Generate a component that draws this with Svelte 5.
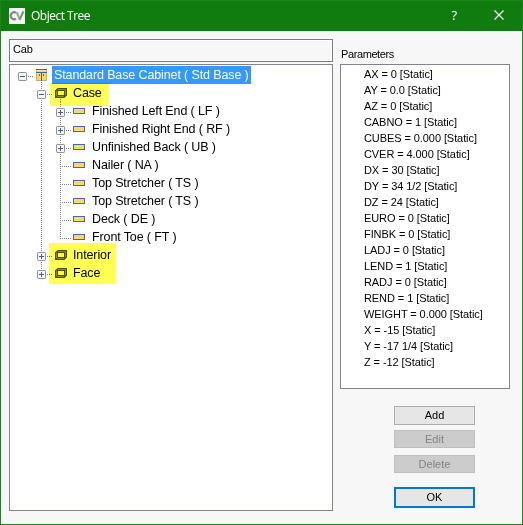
<script>
  const nodes = [
    { level: 0, icon: 'cabinet', toggle: 'minus', text: 'Standard Base Cabinet ( Std Base )', selected: true, last: true },
    { level: 1, icon: 'box', toggle: 'minus', text: 'Case' },
    { level: 2, icon: 'part', toggle: 'plus', text: 'Finished Left End ( LF )' },
    { level: 2, icon: 'part', toggle: 'plus', text: 'Finished Right End ( RF )' },
    { level: 2, icon: 'part', toggle: 'plus', text: 'Unfinished Back ( UB )' },
    { level: 2, icon: 'part', text: 'Nailer ( NA )' },
    { level: 2, icon: 'part', text: 'Top Stretcher ( TS )' },
    { level: 2, icon: 'part', text: 'Top Stretcher ( TS )' },
    { level: 2, icon: 'part', text: 'Deck ( DE )' },
    { level: 2, icon: 'part', text: 'Front Toe ( FT )', last: true },
    { level: 1, icon: 'box', toggle: 'plus', text: 'Interior' },
    { level: 1, icon: 'box', toggle: 'plus', text: 'Face', last: true }
  ];
  const params = [
    'AX = 0', 'AY = 0.0', 'AZ = 0', 'CABNO = 1', 'CUBES = 0.000', 'CVER = 4.000',
    'DX = 30', 'DY = 34 1/2', 'DZ = 24', 'EURO = 0', 'FINBK = 0', 'LADJ = 0',
    'LEND = 1', 'RADJ = 0', 'REND = 1', 'WEIGHT = 0.000', 'X = -15', 'Y = -17 1/4', 'Z = -12'
  ];
</script>

<div class="window">
  <header>
    <svg class="logo" width="16" height="16" viewBox="0 0 16 16">
      <rect width="16" height="16" fill="#f4f4f4" />
      <path d="M7 4.9A3.3 3.5 0 1 0 7 10.6" fill="none" stroke="#858585" stroke-width="2.2" />
      <path d="M7.8 4.2L10.6 11.2" fill="none" stroke="#8fb287" stroke-width="2.2" />
      <path d="M10.6 11.8L14.4 3.4" fill="none" stroke="#858585" stroke-width="2" />
    </svg>
    <h1>Object Tree</h1>
    <span class="help">?</span>
    <svg class="close" width="10" height="10" viewBox="0 0 10 10">
      <path d="M.5 .5L9.5 9.5M9.5 .5L.5 9.5" stroke="#fff" stroke-width="1.2" />
    </svg>
  </header>
  <main>
    <section class="left">
      <div class="field">Cab</div>
      <div class="tree">
        {#each nodes as n}
          <div class="row">
            {#if n.level > 0}<span class="cell"></span>{/if}
            {#if n.level > 1}
              <svg class="cell" viewBox="0 0 19 18"><path class="dots" d="M9.5 0V18" /></svg>
            {/if}
            <svg class="cell" viewBox="0 0 19 18">
              {#if n.level > 0}
                <path class="dots" d={n.last ? 'M9.5 0V11' : 'M9.5 0V18'} />
              {/if}
              <path class="dots" d={n.level === 2 ? 'M11 10.5H20' : 'M11 10.5H21'} />
              {#if n.toggle}
                <rect x="5.5" y="6.5" width="8" height="8" rx=".7" fill="#f6f6f6" stroke="#919191" />
                <path d={n.toggle === 'plus' ? 'M7 10.5H12M9.5 8V13' : 'M7 10.5H12'} stroke="#3c5fae" />
              {/if}
            </svg>
            <svg class="cell" viewBox="0 0 19 18">
              {#if n.icon === 'cabinet'}
                <path class="dots" d="M9.5 16V18" />
                <rect x="4.5" y="3.5" width="10" height="11" fill="#ffd75c" stroke="#c9b06a" />
                <path d="M4 3.5H15M4 6.5H15M9.5 6V15" stroke="#3f62ae" />
                <path d="M7.5 8V10M11.5 8V10" stroke="#806a32" />
                <path d="M5 4.5H14" stroke="#ffe99a" />
              {:else if n.icon === 'box'}
                {#if n.toggle === 'minus'}<path class="dots" d="M9.5 15V18" />{/if}
                <path d="M4.6 6.8L7 4.6H15.4V11.2L13 13.4H4.6Z" fill="#a9a020" stroke="#4c4c00" stroke-width="1.2" />
                <rect x="6.5" y="6.5" width="7" height="5" fill="#ffff99" stroke="#4c4c00" />
                <path d="M4.7 13.4L6.5 11.5M13 13.4L13.5 11.5" stroke="#4c4c00" />
              {:else}
                <rect x="3.5" y="6.5" width="11" height="5" fill="#ffd966" stroke="#4668b0" />
              {/if}
            </svg>
            <span class="label" class:selected={n.selected}>{n.text}</span>
          </div>
        {/each}
        <i class="mark case"></i>
        <i class="mark rest"></i>
      </div>
    </section>
    <section class="right">
      <div class="caption">Parameters</div>
      <div class="list">
        {#each params as p}<div>{p} [Static]</div>{/each}
      </div>
      <div class="buttons">
        <button>Add</button>
        <button disabled>Edit</button>
        <button disabled class="del">Delete</button>
        <button class="ok">OK</button>
      </div>
    </section>
  </main>
</div>

<style>
  .window { box-sizing: border-box; width: 523px; height: 525px; background: #f7f7f7; border: 1px solid #1c821c; font-family: "Liberation Sans", Arial, sans-serif; color: #000; overflow: hidden; }
  header { box-sizing: border-box; display: flex; align-items: center; height: 30px; background: #107c10; color: #fff; padding: 0 18px 2px 8px; }
  .logo { margin-top: 1px; }
  h1 { flex: 1; margin: 1px 0 0 6px; font: 12px/18px "Open Sans", sans-serif; letter-spacing: -.5px; white-space: pre; }
  .help { font: 500 13px/16px "Open Sans", sans-serif; margin-right: 37px; }
  .close { display: block; }
  main { display: flex; padding: 8px 0 0 8px; gap: 7px; }
  .left { width: 324px; flex: none; }
  .field { box-sizing: border-box; height: 23px; border: 1px solid #7a7a7a; box-shadow: inset 0 0 0 1px #fff; padding: 2px 3px; font: 11px/15px "Liberation Sans", Arial, sans-serif; letter-spacing: -.2px; }
  .tree { position: relative; box-sizing: border-box; height: 447px; margin-top: 2px; border: 1px solid #828290; background: #fff; padding: 1px 0 0 3px; }
  .row { display: flex; height: 18px; }
  .cell { display: block; flex: none; width: 19px; height: 18px; overflow: visible; }
  .dots { fill: none; stroke: #808080; stroke-dasharray: 1 1; }
  .label { font-size: 12.5px; line-height: 18px; height: 18px; padding: 0 3px; white-space: pre; letter-spacing: -.12px; }
  .selected { background: #3399ff; color: #fff; margin-left: 1px; padding: 0 2px; }
  .mark { position: absolute; background: #ffff54; mix-blend-mode: multiply; }
  .case { left: 40px; top: 18px; width: 59px; height: 23px; }
  .rest { left: 39px; top: 178px; width: 67px; height: 41px; }
  .right { width: 171px; }
  .caption { height: 25px; box-sizing: border-box; padding: 7px 0 0 1px; font-size: 11px; line-height: 16px; letter-spacing: -.4px; }
  .list { box-sizing: border-box; width: 170px; height: 325px; border: 1px solid #828290; background: #fff; padding: 1px 0 0 23px; font-size: 11px; line-height: 16px; letter-spacing: -.08px; white-space: pre; }
  .buttons { display: flex; flex-direction: column; margin: 17px 0 0 54px; width: 81px; }
  button { box-sizing: border-box; height: 19px; padding: 0; margin: 0 0 5px; border: 1px solid #adadad; background: #e6e6e6; font: 11px/15px "Liberation Sans", Arial, sans-serif; color: #000; border-radius: 0; }
  button:disabled { height: 18px; background: #ccc; border-color: #bfbfbf; color: #838383; margin-bottom: 7px; }
  .del:disabled { margin-bottom: 14px; }
  .ok { height: 21px; border: 2px solid #0078d7; }
</style>
